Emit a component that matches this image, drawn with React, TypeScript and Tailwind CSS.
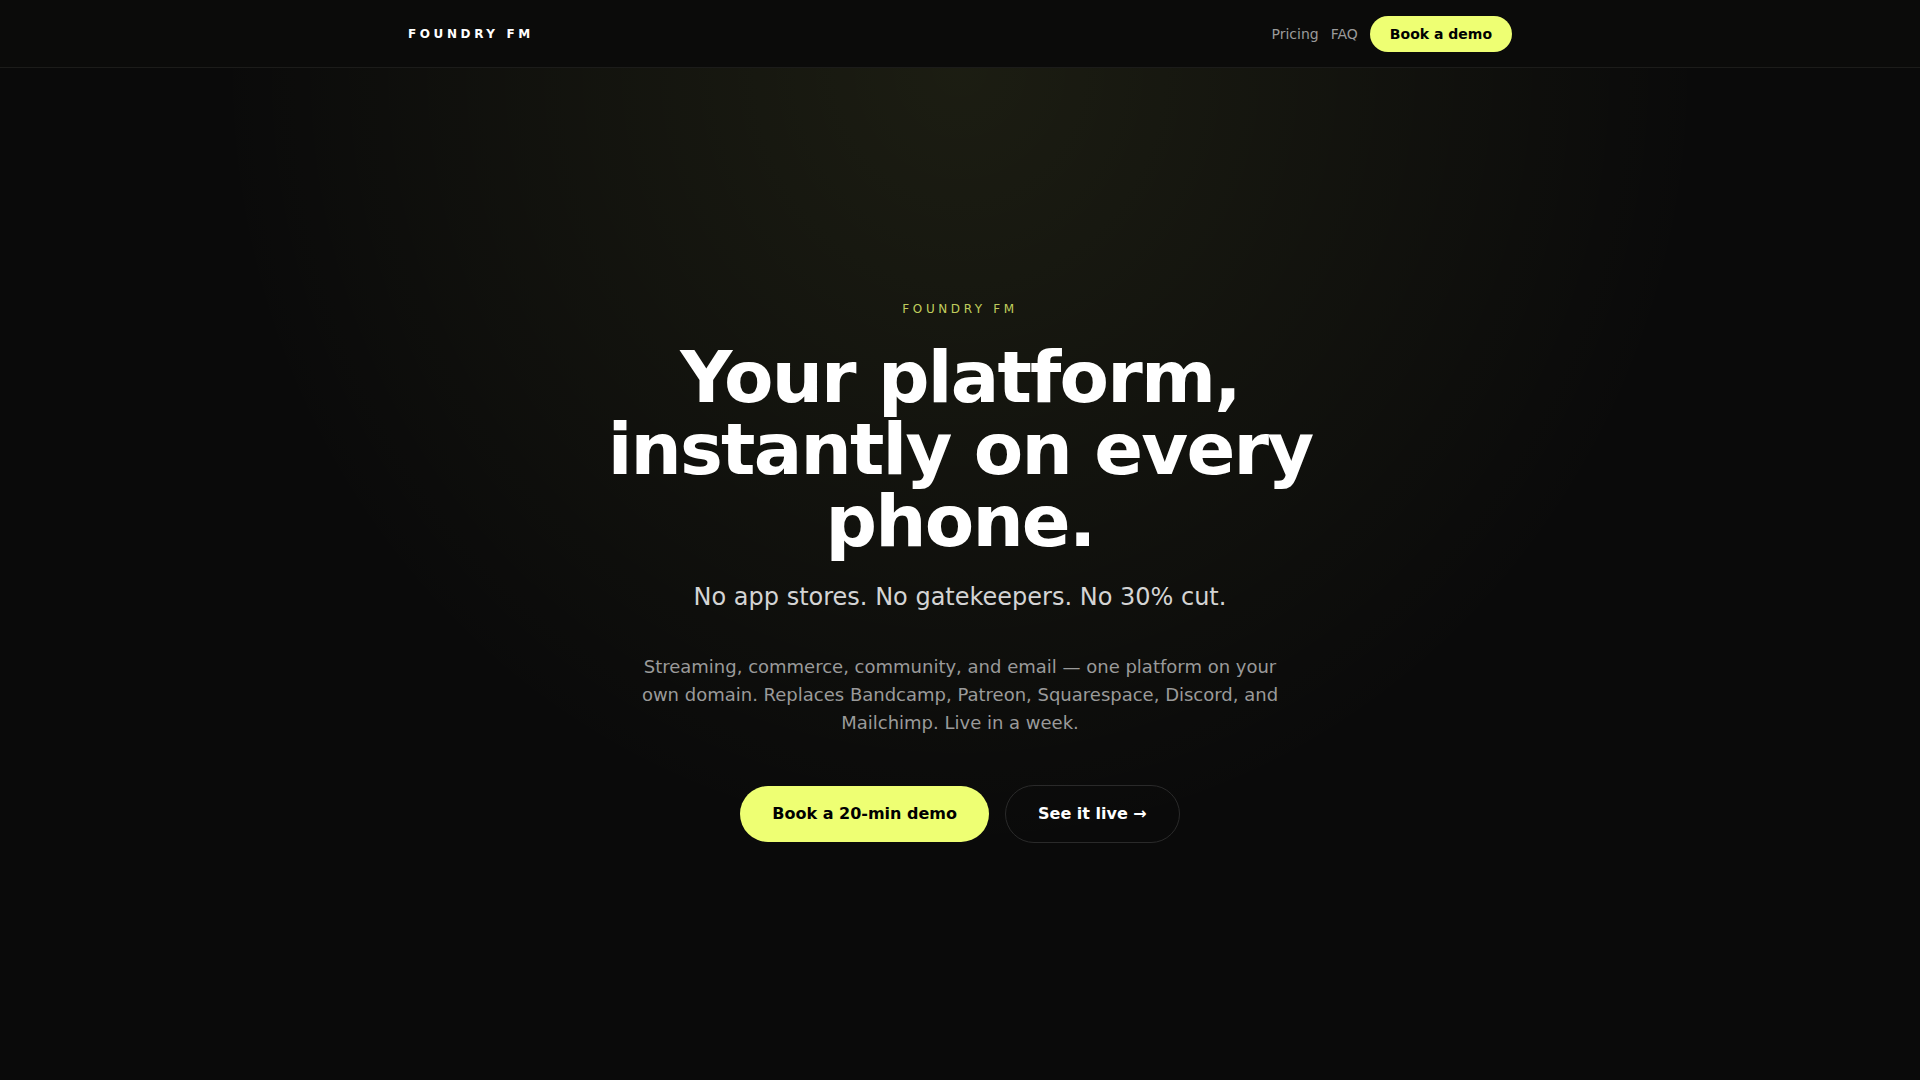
export default function App() {
  return (
    <div
      className="min-h-screen flex flex-col bg-[#0a0a0a] text-white"
      style={{ fontFamily: '"DejaVu Sans", Verdana, sans-serif' }}
    >
      <header className="h-[68px] border-b border-[#1c1c1a] bg-[#0b0b0a]">
        <div className="mx-auto max-w-6xl px-6 h-full flex items-center justify-between">
          <span className="text-xs font-bold tracking-[0.3em]">FOUNDRY FM</span>
          <nav className="flex items-center gap-3 text-sm">
            <a className="text-[#9a9a9a]" href="#pricing">Pricing</a>
            <a className="text-[#9a9a9a]" href="#faq">FAQ</a>
            <a className="rounded-full bg-[#eeff73] px-5 py-2 font-bold text-black" href="#demo">
              Book a demo
            </a>
          </nav>
        </div>
      </header>

      <main className="flex-1 flex items-center justify-center bg-[radial-gradient(ellipse_at_top,rgba(238,255,115,0.08),transparent_55%)]">
        <div className="flex flex-col items-center text-center px-6 pt-[3px] pb-2">
          <p className="text-xs tracking-[0.3em] text-[#eeff73]/80">FOUNDRY FM</p>
          <h1 className="mt-6 max-w-3xl text-7xl leading-none font-bold tracking-tight">
            Your platform, instantly on every phone.
          </h1>
          <p className="mt-6 text-2xl text-[#d4d4d4]">No app stores. No gatekeepers. No 30% cut.</p>
          <p className="mt-10 max-w-2xl text-lg leading-7 text-[#9a9a9a]">
            Streaming, commerce, community, and email — one platform on your own domain. Replaces Bandcamp,
            Patreon, Squarespace, Discord, and Mailchimp. Live in a week.
          </p>
          <div className="mt-12 flex items-center gap-4">
            <a className="rounded-full bg-[#eeff73] px-8 py-4 text-base font-bold text-black" href="#demo">
              Book a 20-min demo
            </a>
            <a className="rounded-full border border-[#2a2a2a] px-8 py-4 text-base font-bold text-white" href="#live">
              See it live →
            </a>
          </div>
        </div>
      </main>
    </div>
  )
}
